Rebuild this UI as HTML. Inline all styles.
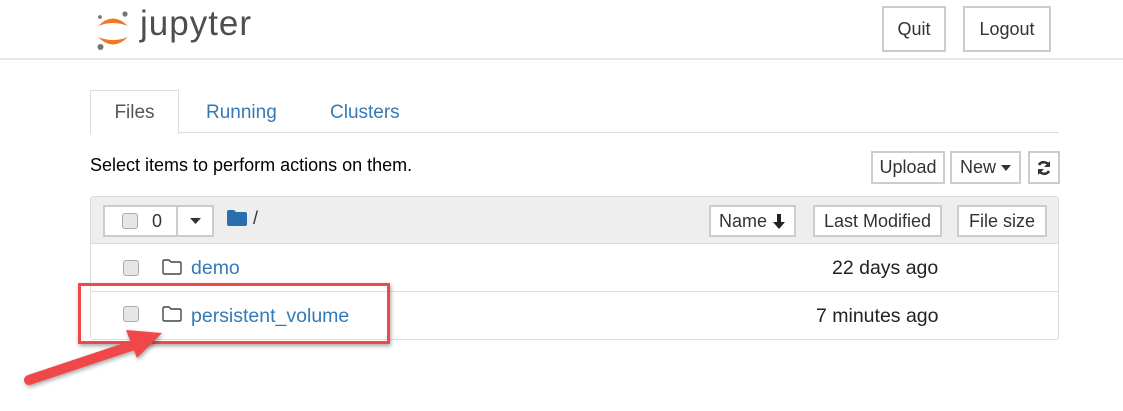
<!DOCTYPE html>
<html><head><meta charset="utf-8"><style>
*{box-sizing:border-box;margin:0;padding:0}
body{width:1123px;height:411px;background:#fff;font-family:"Liberation Sans",Arial,sans-serif;color:#000;position:relative;overflow:hidden}
.a{position:absolute}
.btn{position:absolute;border:2px solid #ccc;background:#fff;font-size:18px;color:#333;display:flex;align-items:center;justify-content:center}
.link{color:#337ab7}
</style></head><body>
<div class="a" style="left:0;top:58px;width:1123px;height:2px;background:#e7e7e7"></div>
<svg class="a" style="left:93px;top:8px" width="44" height="44" viewBox="0 0 44 44">
<path d="M5 18 Q20 3 35 18 Q20 12 5 18Z" fill="#f37726"/>
<path d="M5 29 Q20 44 35 29 Q20 35 5 29Z" fill="#f37726"/>
<circle cx="32" cy="6" r="2.6" fill="#767677"/><circle cx="7" cy="9" r="1.9" fill="#767677"/><circle cx="7.5" cy="39" r="3" fill="#767677"/>
</svg>
<div class="a" style="left:140px;top:4px;font-size:35px;color:#4e4e4e;letter-spacing:1px">jupyter</div>
<div class="btn" style="left:882px;top:6px;width:64px;height:46px">Quit</div>
<div class="btn" style="left:963px;top:6px;width:88px;height:46px">Logout</div>

<div class="a" style="left:90px;top:132px;width:969px;height:1px;background:#ddd"></div>
<div class="a" style="left:90px;top:90px;width:89px;height:44px;border:1px solid #ddd;border-bottom:none;background:#fff;font-size:19px;color:#555;text-align:center;line-height:44px">Files</div>
<div class="a link" style="left:206px;top:102px;font-size:19px">Running</div>
<div class="a link" style="left:330px;top:102px;font-size:19px">Clusters</div>

<div class="a" style="left:90px;top:155px;font-size:18px">Select items to perform actions on them.</div>
<div class="btn" style="left:871px;top:151px;width:74px;height:33px">Upload</div>
<div class="btn" style="left:950px;top:151px;width:71px;height:33px">New&nbsp;<svg width="10" height="6"><path d="M0 0H10L5 6Z" fill="#333"/></svg></div>
<div class="btn" style="left:1028px;top:151px;width:32px;height:33px"><svg width="16" height="16" viewBox="0 0 16 16"><path d="M13 6A5.5 5.5 0 0 0 3 5" stroke="#333" stroke-width="2.6" fill="none"/><path d="M14 1V7H8Z" fill="#333"/><path d="M3 10A5.5 5.5 0 0 0 13 11" stroke="#333" stroke-width="2.6" fill="none"/><path d="M2 15V9H8Z" fill="#333"/></svg></div>

<div class="a" style="left:90px;top:196px;width:969px;height:144px;border:1px solid #ddd;border-radius:3px"></div>
<div class="a" style="left:91px;top:197px;width:967px;height:47px;background:#eee;border-bottom:1px solid #ddd"></div>
<div class="btn" style="left:103px;top:205px;width:75px;height:32px;justify-content:flex-start;padding-left:17px"><span style="display:inline-block;width:16px;height:16px;border:1px solid #aaa;border-radius:3px;background:#e6e6e6"></span><span style="margin-left:14px">0</span></div>
<div class="btn" style="left:176px;top:205px;width:38px;height:32px"><svg width="11" height="6"><path d="M0 0H11L5.5 6Z" fill="#333"/></svg></div>
<svg class="a" style="left:227px;top:210px" width="20" height="16" viewBox="0 0 20 16"><path d="M0 2Q0 0 2 0H7L9 2H18Q20 2 20 4V14Q20 16 18 16H2Q0 16 0 14Z" fill="#2a6eb0"/></svg>
<div class="a" style="left:253px;top:208px;font-size:18px;color:#333">/</div>
<div class="btn" style="left:709px;top:205px;width:87px;height:32px">Name&nbsp;<svg width="14" height="15" viewBox="0 0 14 15"><path d="M5 0H9V8H13L7 15L1 8H5Z" fill="#222"/></svg></div>
<div class="btn" style="left:813px;top:205px;width:129px;height:32px">Last Modified</div>
<div class="btn" style="left:957px;top:205px;width:90px;height:32px">File size</div>

<div class="a" style="left:91px;top:291px;width:967px;height:1px;background:#ddd"></div>
<div class="a" style="left:123px;top:260px;width:16px;height:16px;border:1px solid #aaa;border-radius:3px;background:#e6e6e6"></div>
<svg class="a" style="left:162px;top:259px" width="20" height="16" viewBox="0 0 20 16"><path d="M1 2.5Q1 1 2.5 1H7L9 3H17.5Q19 3 19 4.5V13.5Q19 15 17.5 15H2.5Q1 15 1 13.5Z" fill="none" stroke="#444" stroke-width="1.4"/></svg>
<div class="a link" style="left:191px;top:257px;font-size:19.5px">demo</div>
<div class="a" style="left:832px;top:257px;font-size:19.5px;color:#222">22 days ago</div>

<div class="a" style="left:123px;top:306px;width:16px;height:16px;border:1px solid #aaa;border-radius:3px;background:#e6e6e6"></div>
<svg class="a" style="left:162px;top:306px" width="20" height="16" viewBox="0 0 20 16"><path d="M1 2.5Q1 1 2.5 1H7L9 3H17.5Q19 3 19 4.5V13.5Q19 15 17.5 15H2.5Q1 15 1 13.5Z" fill="none" stroke="#444" stroke-width="1.4"/></svg>
<div class="a link" style="left:191px;top:305px;font-size:19.5px">persistent_volume</div>
<div class="a" style="left:816px;top:305px;font-size:19.5px;color:#222">7 minutes ago</div>

<div class="a" style="left:78px;top:283px;width:312px;height:61px;border:3px solid #f04848;box-shadow:1px 2px 4px rgba(0,0,0,.35)"></div>
<svg class="a" style="left:0;top:300px" width="200" height="100" viewBox="0 300 200 100"><g style="filter:drop-shadow(1px 2px 2px rgba(0,0,0,.35))"><path d="M29 380L140 343" stroke="#f04848" stroke-width="10" stroke-linecap="round"/><path d="M126 330L162 333L137 358Z" fill="#f04848"/></g></svg>
</body></html>
